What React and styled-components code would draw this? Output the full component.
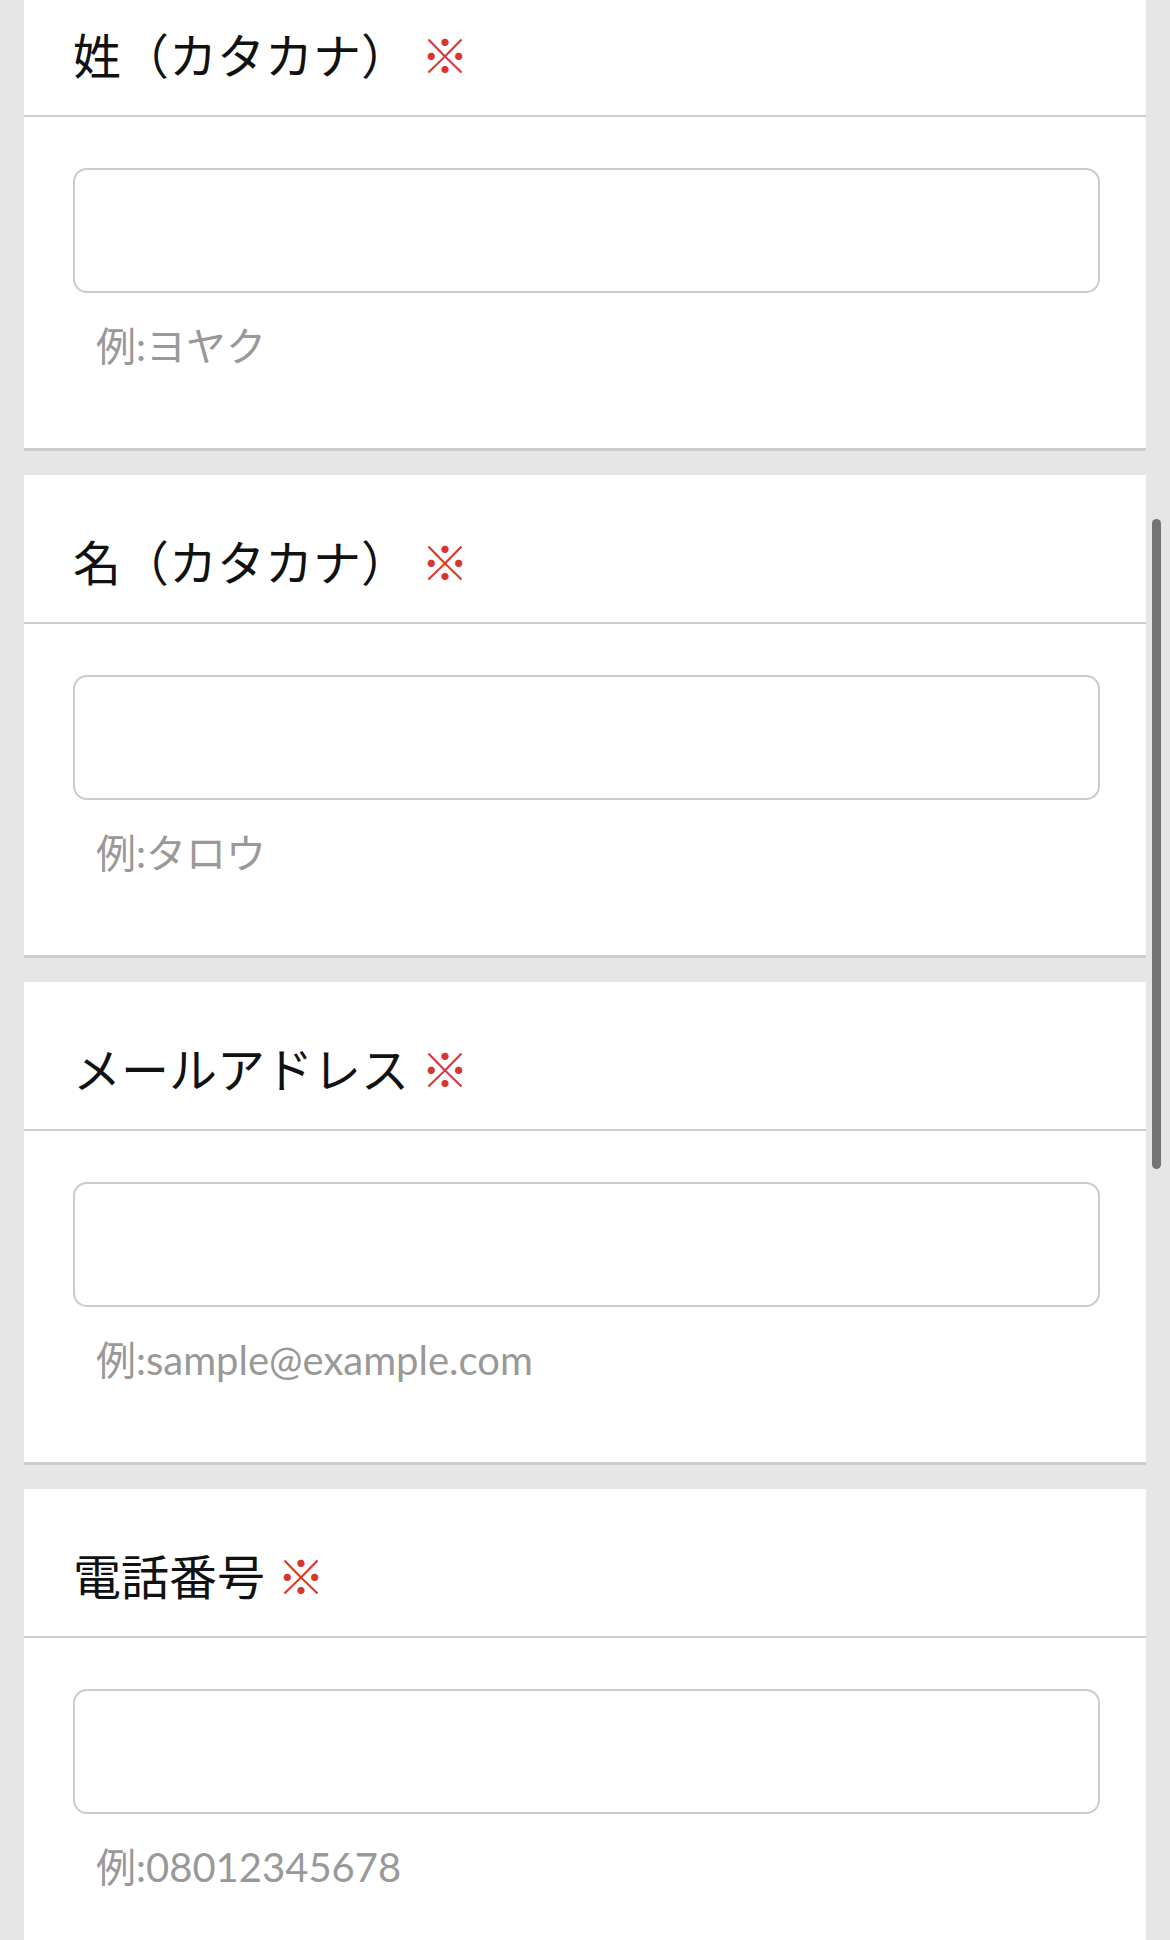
import React from 'react';
import styled, { createGlobalStyle } from 'styled-components';

const GlobalStyle = createGlobalStyle`
  html, body {
    margin: 0;
    padding: 0;
    background: #e6e6e6;
    height: 1940px;
    overflow: hidden;
  }

  body {
    font-family: "Noto Sans CJK JP", "Noto Sans", sans-serif;
  }
`;

const Page = styled.div`
  display: flex;
  flex-direction: column;
  gap: 24px;
  margin-top: -32px; /* page is scrolled a little */
  padding: 0 24px;
`;

const Card = styled.section`
  background: #fff;
  border-bottom: 3px solid #cdcdcd;
`;

const CardHeader = styled.div`
  display: flex;
  align-items: center;
  height: 149px;
  box-sizing: border-box;
  padding: 49px 46px 26px 49px;
  border-bottom: 2px solid #cdcdcd;
`;

const Label = styled.h2`
  margin: 0;
  font-size: 48px;
  font-weight: 400;
  line-height: 72px;
  color: #111;
`;

const Required = styled.span`
  margin-left: 12px;
  font-size: 48px;
  line-height: 72px;
  color: #d9362b;
`;

const CardBody = styled.div`
  display: flex;
  flex-direction: column;
  padding: 51px 46px 72px 49px;
`;

const TextInput = styled.input`
  display: block;
  width: 100%;
  height: 125px;
  box-sizing: border-box;
  border: 2px solid #cccccc;
  border-radius: 14px;
  background: #fff;
  outline: none;
  font-size: 40px;
  padding: 0 24px;
`;

const Example = styled.p`
  margin: 23px 0 0;
  padding-left: 23px;
  font-family: Lato, "Noto Sans CJK JP", sans-serif;
  font-size: 40px;
  line-height: 60px;
  color: #999;
`;

const ScrollThumb = styled.div`
  position: fixed;
  top: 519px;
  right: 9px;
  width: 9px;
  height: 650px;
  border-radius: 5px;
  background: #737373;
`;

const fields = [
  { label: '姓（カタカナ）', hint: '例:ヨヤク', type: 'text' },
  { label: '名（カタカナ）', hint: '例:タロウ', type: 'text' },
  { label: 'メールアドレス', hint: '例:sample@example.com', type: 'email' },
  { label: '電話番号', hint: '例:08012345678', type: 'tel' },
];

function FormField({ label, hint, type }) {
  return (
    <Card>
      <CardHeader>
        <Label>{label}</Label>
        <Required>※</Required>
      </CardHeader>
      <CardBody>
        <TextInput type={type} />
        <Example>{hint}</Example>
      </CardBody>
    </Card>
  );
}

export default function App() {
  return (
    <>
      <GlobalStyle />
      <Page>
        {fields.map((f) => (
          <FormField key={f.label} {...f} />
        ))}
      </Page>
      <ScrollThumb />
    </>
  );
}
